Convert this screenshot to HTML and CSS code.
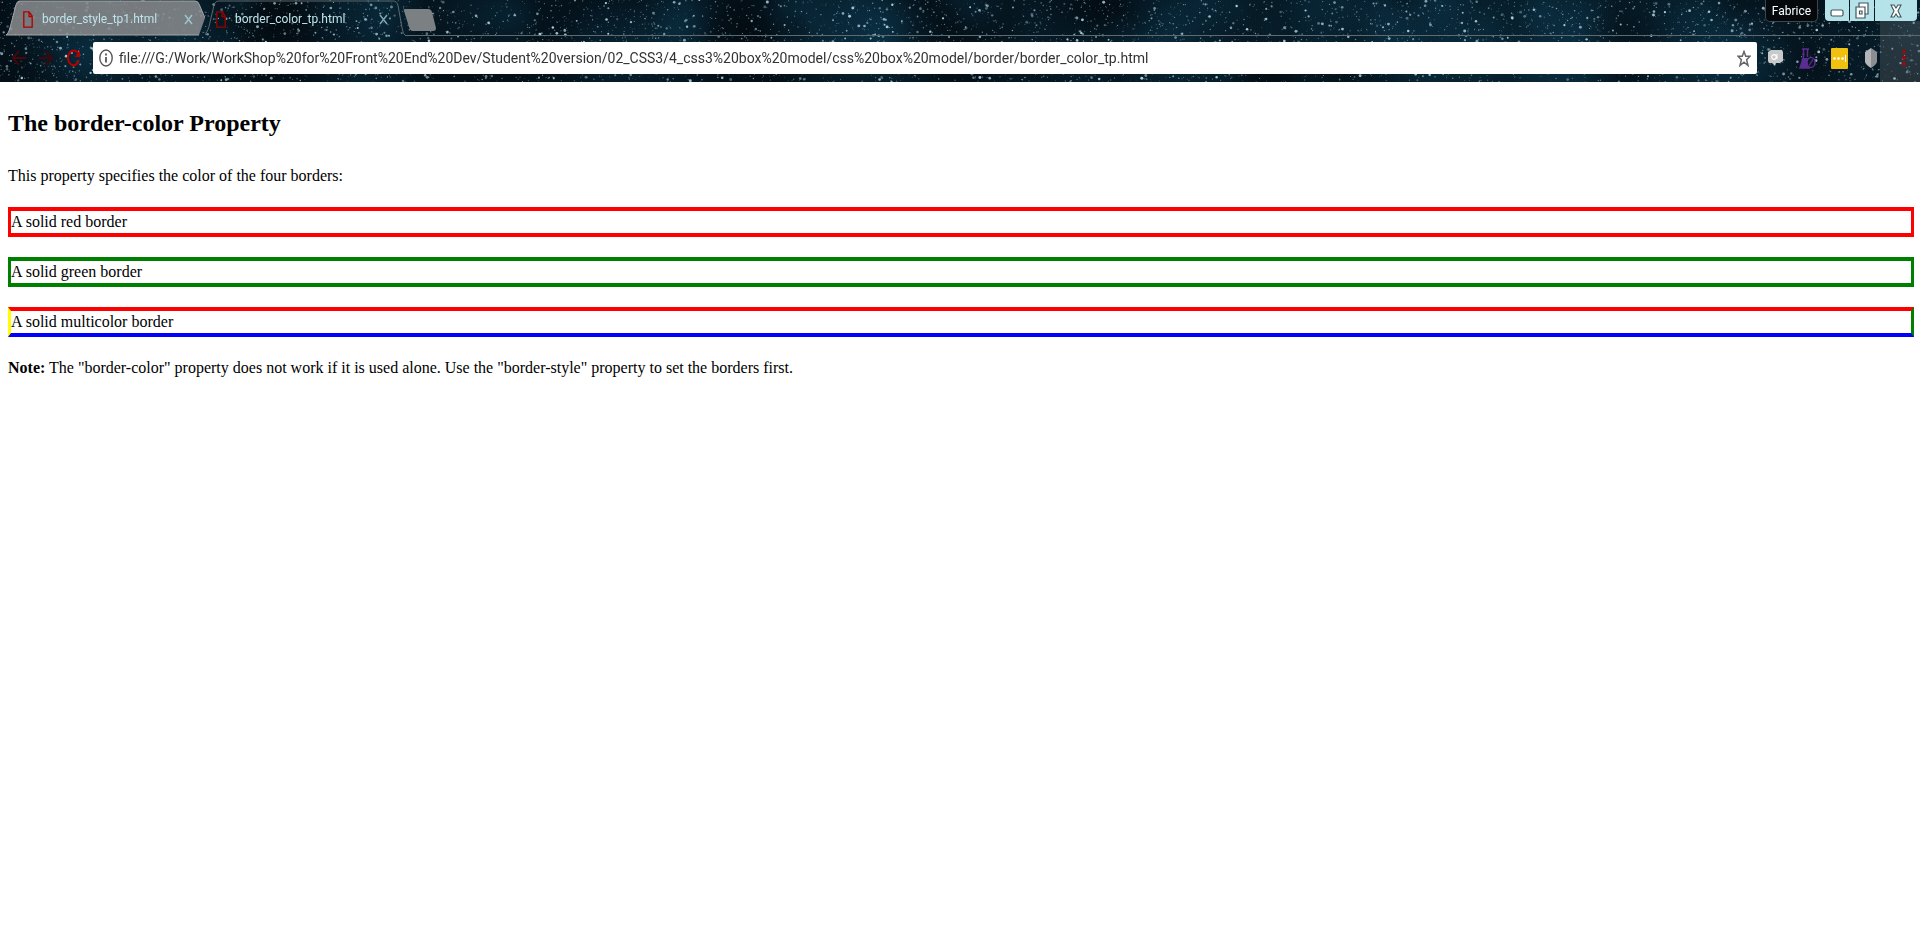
FILE: index.html
```html
<!DOCTYPE html>
<html lang="en">
<head>
<meta charset="utf-8">
<title>border_color_tp.html</title>
<link rel="stylesheet" href="styles.css">
</head>
<body>
<header class="browser">
  <canvas class="stars" id="stars" aria-hidden="true"></canvas>
  <div class="tabstrip">
    <nav class="tabs" aria-label="Tabs">
      <div class="tab tab-back">
        <svg class="tab-shape" viewBox="0 0 200 36" preserveAspectRatio="none"><path d="M0 35C2 34 3 31 4 28L10 5Q11 1 14 1H190Q193 1 194 4L200 18L194 35Z" fill="#86898b" fill-opacity=".88"/><path d="M0 35C2 34 3 31 4 28L10 5Q11 1 14 1H190Q193 1 194 4L200 18M0 35H194" fill="none" stroke="#a3a7a9"/></svg>
        <svg class="file" viewBox="0 0 10 17"><path d="M.8.8H6L9.2 5V16.2H.8ZM6 .8V5.500H9.200" fill="none" stroke="#b00000" stroke-width="1.300"/></svg>
        <a class="tab-title" href="#">border_style_tp1.html</a>
        <button class="close" aria-label="Close tab"><svg viewBox="0 0 9 11"><path d="M1 1L8 10M8 1L1 10" stroke="#9cc5cc" stroke-width="1.500"/></svg></button>
      </div>
      <div class="tab tab-front">
        <svg class="tab-shape" viewBox="0 0 204 36" preserveAspectRatio="none"><path d="M0 35C2 32 3 30 4 27L9 6Q10 1 14 1H192Q196 1 197 6L201 28Q202 34 204 35" fill="none" stroke="#5d6a70"/></svg>
        <svg class="file" viewBox="0 0 10 17"><path d="M.8.8H6L9.2 5V16.2H.8ZM6 .8V5.500H9.200" fill="none" stroke="#980000" stroke-width="1.300"/></svg>
        <a class="tab-title" href="#">border_color_tp.html</a>
        <button class="close" aria-label="Close tab"><svg viewBox="0 0 9 11"><path d="M1 1L8 10M8 1L1 10" stroke="#7fa5ad" stroke-width="1.500"/></svg></button>
      </div>
      <button class="new-tab" aria-label="New tab"><svg viewBox="0 0 34 22"><path d="M2 0H25Q28 0 29 3L33 19Q33 22 30 22H10Q7 22 6 18L1 2Q0 0 2 0Z" fill="#7b8083"/></svg></button>
      <div class="strip-line"></div>
    </nav>
    <div class="window">
      <button class="profile">Fabrice</button>
      <div class="controls">
        <button class="control" aria-label="Minimize"><svg class="minimize" width="14" height="8" viewBox="0 0 14 8"><rect x="1" y="1" width="12" height="6" rx="1.500" fill="#fff" stroke="#40565c" stroke-width="1.200"/></svg></button>
        <button class="control" aria-label="Restore"><svg width="14" height="17" viewBox="0 0 14 17"><path d="M4 1H13V12H10V16H1V5H4Z" fill="#fff" stroke="#40565c" stroke-width="1.200"/><path d="M4 5H10V12M4.500 9H7V12H4.500Z" fill="none" stroke="#40565c" stroke-width="1.200"/></svg></button>
        <button class="control control-close" aria-label="Close"><svg width="12" height="14" viewBox="0 0 12 14"><path d="M1 1H4L6 4L8 1H11L8 7L11 13H8L6 10L4 13H1L4 7Z" fill="#fff" stroke="#40565c" stroke-width="1.100"/></svg></button>
      </div>
    </div>
  </div>
  <div class="toolbar">
    <div class="nav">
      <button class="tool" aria-label="Back"><svg width="14" height="16" viewBox="0 0 14 16"><path d="M14 8H1M7 1L1 8L7 15" fill="none" stroke="#4a070b" stroke-width="1.800"/></svg></button>
      <button class="tool" aria-label="Forward"><svg width="14" height="16" viewBox="0 0 14 16"><path d="M0 8H13M7 1L13 8L7 15" fill="none" stroke="#43070b" stroke-width="1.800"/></svg></button>
      <button class="tool" aria-label="Reload"><svg width="15" height="18" viewBox="0 0 15 18"><path d="M11.500 3.700A5.600 7.300 0 1 0 12.800 11.500" fill="none" stroke="#b40000" stroke-width="2"/><path d="M14 1V8H8.500Z" fill="#b40000"/></svg></button>
    </div>
    <form class="address">
      <svg class="info" viewBox="0 0 14 18"><ellipse cx="7" cy="9" rx="6.200" ry="8" fill="none" stroke="#555" stroke-width="1.400"/><path d="M7 8V13.500M7 4.500V6.500" stroke="#555" stroke-width="1.800"/></svg>
      <input class="url" aria-label="Address" value="file:///G:/Work/WorkShop%20for%20Front%20End%20Dev/Student%20version/02_CSS3/4_css3%20box%20model/css%20box%20model/border/border_color_tp.html">
      <button class="star" type="button" aria-label="Bookmark"><svg width="14" height="17" viewBox="0 0 14 17"><path d="M7 1.500L8.700 6.300H13L9.600 9.800L11 15.500L7 12.200L3 15.500L4.400 9.800L1 6.300H5.300Z" fill="none" stroke="#666" stroke-width="1.500"/></svg></button>
    </form>
    <div class="extensions">
      <button class="tool" aria-label="Comments"><svg width="17" height="18" viewBox="0 0 17 18"><path d="M4 1H15L16 3V12L13 14H9L8 17L5 14H2L1 12V3Z" fill="#c9c9c9"/><circle cx="7" cy="8" r="2.300" fill="none" stroke="#fff" stroke-width="1.200"/><path d="M10 5V10" stroke="#fff"/></svg></button>
      <button class="tool" aria-label="Lab"><svg width="17" height="21" viewBox="0 0 17 21"><path d="M3 1H10M4.500 1V9L1 20H11M8.500 1V9" fill="none" stroke="#5a2d91" stroke-width="1.500"/><path d="M4 10H9L12 20H1Z" fill="#5a2d91"/><ellipse cx="12" cy="14.500" rx="4" ry="5" fill="#07151d" stroke="#5a2d91" stroke-width="1.600"/><path d="M10 17.500L14 11.500" stroke="#5a2d91" stroke-width="1.300"/></svg></button>
      <button class="tool" aria-label="Passwords"><svg width="17" height="21" viewBox="0 0 17 21"><rect width="17" height="21" rx="1" fill="#f0c20f"/><g fill="#fff"><circle cx="3.500" cy="10.500" r="1.300"/><circle cx="7.500" cy="10.500" r="1.300"/><circle cx="11.500" cy="10.500" r="1.300"/><rect x="14" y="7" width="1" height="7"/></g></svg></button>
      <button class="tool shield" aria-label="Shield"><svg width="12" height="20" viewBox="0 0 12 20"><path d="M6 0L12 4V14Q11 17 6 20Z" fill="#8c8f91"/><path d="M6 0L0 4V14Q1 17 6 20Z" fill="#b3b5b6"/></svg></button>
      <button class="tool menu" aria-label="Menu"><svg width="4" height="18" viewBox="0 0 4 18"><g fill="#b40000"><ellipse cx="2" cy="3" rx="1.700" ry="2"/><ellipse cx="2" cy="9" rx="1.700" ry="2"/><ellipse cx="2" cy="15" rx="1.700" ry="2"/></g></svg></button>
    </div>
  </div>
</header>
<main class="page">
  <h1 class="heading">The border-color Property</h1>
  <p class="para">This property specifies the color of the four borders:</p>
  <p class="para boxed red">A solid red border</p>
  <p class="para boxed green">A solid green border</p>
  <p class="para boxed multi">A solid multicolor border</p>
  <p class="para"><b>Note:</b> The "border-color" property does not work if it is used alone. Use the "border-style" property to set the borders first.</p>
</main>
<script src="stars.js"></script>
</body>
</html>
```
FILE: styles.css
```css
* { box-sizing: border-box; }
body { margin: 0; background: #fff; color: #000; font-family: "Liberation Serif", serif; }
button { border: 0; padding: 0; background: none; display: flex; align-items: center; justify-content: center; }
svg { display: block; flex: none; }
.browser { position: relative; background: #04121a; font-family: Roboto, sans-serif; padding-bottom: 8px; overflow: hidden; }
.stars { position: absolute; inset: 0; width: 100%; height: 100%; }
.tabstrip { position: relative; display: flex; height: 36px; }
.tabs { display: flex; flex: 1; padding-left: 6px; }
.tab { position: relative; display: flex; align-items: center; height: 36px; padding-top: 2px; }
.tab-back { width: 199px; padding-left: 17px; padding-right: 12px; }
.tab-front { width: 200px; padding-left: 11px; padding-right: 17px; }
.tab-shape { position: absolute; inset: 0; width: 100%; height: 100%; }
.file { position: relative; width: 10px; height: 17px; }
.tab-title { position: relative; flex: 1; margin-left: 9px; color: #bfe3ea; font-size: 12px; line-height: 20px; text-decoration: none; white-space: nowrap; }
.close { position: relative; width: 9px; height: 11px; }
.close svg { width: 9px; height: 11px; }
.new-tab { position: relative; align-self: flex-start; width: 34px; height: 22px; margin: 9px 0 0 -2px; }
.new-tab svg { width: 34px; height: 22px; }
.strip-line { flex: 1; align-self: flex-end; height: 1px; margin-left: -32px; background: #5d6a70; }
.window { display: flex; align-items: flex-start; gap: 7px; padding-right: 3px; border-bottom: 1px solid #5d6a70; }
.profile { width: 53px; height: 22px; border: 1px solid #3c474c; border-top: 0; border-radius: 0 0 5px 5px; background: #05090c; color: #fff; font: 12px Roboto, sans-serif; }
.controls { display: flex; gap: 1px; height: 21px; border-radius: 0 0 4px 4px; overflow: hidden; }
.control { width: 24px; height: 21px; background: #b6e3ea; }
.minimize { margin-top: 4px; }
.control-close { width: 42px; }
.toolbar { position: relative; display: flex; align-items: center; padding-top: 6px; }
.nav { display: flex; align-items: center; gap: 13px; width: 93px; padding-left: 12px; }
.tool { position: relative; }
.address { flex: 1; display: flex; align-items: center; height: 32px; margin: 0; padding: 0 6px; background: #fff; border-radius: 2px; }
.info { width: 14px; height: 18px; }
.url { flex: 1; min-width: 0; margin-left: 6px; padding: 0; border: 0; outline: 0; background: none; color: #333; font: 14px Roboto, sans-serif; }
.extensions { display: flex; align-items: center; width: 163px; gap: 15px; padding-left: 10px; }
.shield { margin-left: 2px; }
.menu { margin-left: 10px; }
.page { padding: 23px 6px 0 8px; }
.heading { margin: 0 0 24px; font-size: 24px; line-height: 36px; }
.para { margin: 0 0 20px; font-size: 16px; line-height: 22px; }
.boxed { border: solid; border-width: 4px 3px; }
.red { border-color: red; }
.green { border-color: green; }
.multi { border-color: red green blue yellow; }
```
FILE: stars.js
```js
const canvas = document.getElementById("stars");
const w = canvas.width = canvas.clientWidth;
const h = canvas.height = canvas.clientHeight;
const g = canvas.getContext("2d");
let seed = 7;
const rnd = () => (seed = (seed * 16807) % 2147483647) / 2147483647;
g.fillStyle = "#04121b";
g.fillRect(0, 0, w, h);
for (let i = 0; i < 150; i++) {
  const x = rnd() * w, y = rnd() * h, r = 20 + rnd() * 60;
  const tint = rnd() < 0.4 ? "2,6,10" : "12,54,76";
  const glow = g.createRadialGradient(x, y, 0, x, y, r);
  glow.addColorStop(0, `rgba(${tint},.34)`);
  glow.addColorStop(1, `rgba(${tint},0)`);
  g.fillStyle = glow;
  g.fillRect(x - r, y - r, 2 * r, 2 * r);
}
for (let i = 0; i < w * 3; i++) {
  const big = rnd() < 0.12;
  const r = big ? 0.9 + rnd() * 0.6 : 0.3 + rnd() * 0.5;
  g.fillStyle = `rgba(${big ? "190,228,240" : "140,175,188"},${0.3 + rnd() * 0.6})`;
  g.beginPath();
  g.arc(rnd() * w, rnd() * h, r, 0, 7);
  g.fill();
}
g.fillStyle = "rgba(150,150,150,.22)";
g.fillRect(w - 40, 21, 40, h);
```
